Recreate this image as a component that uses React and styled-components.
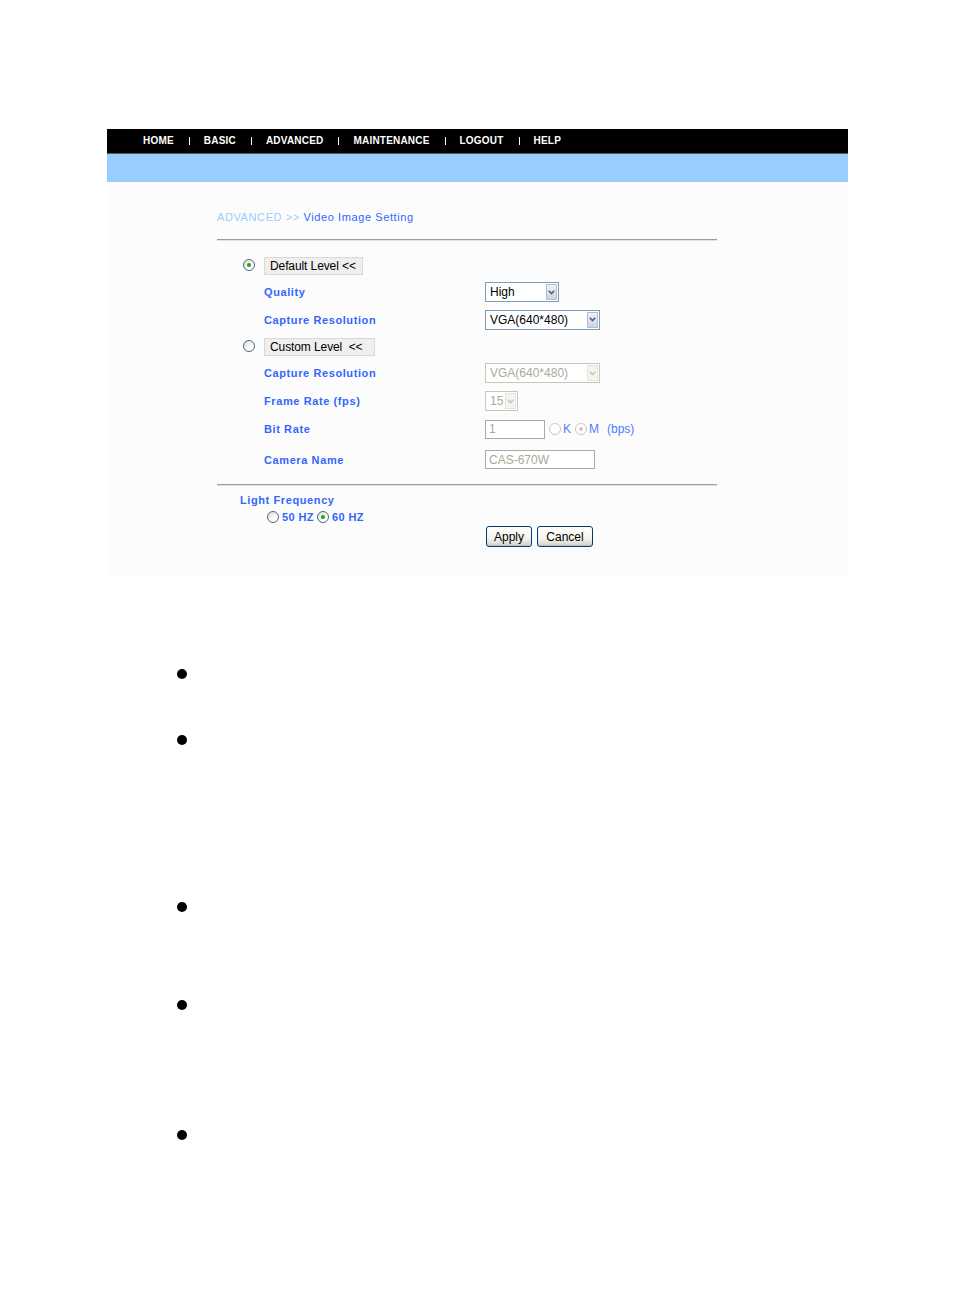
import React from 'react';
import styled, { createGlobalStyle } from 'styled-components';

const Global = createGlobalStyle`
  html, body { margin: 0; padding: 0; background: #fff; }
  body { font-family: "Liberation Sans", Arial, sans-serif; }
  * { box-sizing: border-box; }
`;

const Page = styled.div`
  width: 954px;
  min-height: 1311px;
  padding-top: 129px;
`;

const Frame = styled.div`
  margin-left: 107px;
  width: 741px;
`;

const NavBar = styled.nav`
  height: 25px;
  background: #000;
  border-bottom: 1px solid #4d5863;
  display: flex;
  align-items: center;
  padding-left: 36px;
`;

const NavItem = styled.span`
  color: #fff;
  font-weight: bold;
  font-size: 10px;
  letter-spacing: 0.2px;
  line-height: 12px;
`;

const NavSep = styled.span`
  display: inline-block;
  width: 1px;
  height: 8px;
  margin: 0 14px 0 15px;
  background: #fff;
`;

const BlueBand = styled.div`
  height: 28px;
  background: #99ccff;
`;

const Panel = styled.div`
  height: 393px;
  background: #fcfcfc;
  padding: 28px 0 0 110px;
`;

const Breadcrumb = styled.div`
  font-size: 11px;
  line-height: 14px;
  letter-spacing: 0.6px;
  color: #3366ff;
`;

const Crumb = styled.span`
  color: #99ccff;
`;

const Divider = styled.div`
  width: 500px;
  height: 2px;
  border-top: 1px solid #9c9c9c;
  border-bottom: 1px solid #e2e2e2;
  margin-top: ${p => p.$mt}px;
`;

const Form = styled.div`
  margin-top: 11px;
  display: flex;
  flex-direction: column;
`;

const Row = styled.div`
  display: grid;
  grid-template-columns: 47px 221px 1fr;
  align-items: center;
  height: ${p => p.$h}px;
`;

const RadioCell = styled.div`
  padding-left: 26px;
  display: flex;
  align-items: center;
`;

const Radio = styled.span`
  position: relative;
  display: inline-block;
  flex: none;
  width: 12px;
  height: 12px;
  margin-left: ${p => p.$ml || 0}px;
  border-radius: 50%;
  border: 1px solid ${p => (p.$disabled ? '#cac8bb' : '#4a6a8c')};
  background: ${p => (p.$disabled ? '#fff' : 'linear-gradient(135deg, #dcdcd6 0%, #ffffff 70%)')};
  &::after {
    content: '';
    display: ${p => (p.$checked ? 'block' : 'none')};
    position: absolute;
    left: 3px;
    top: 3px;
    width: 4px;
    height: 4px;
    border-radius: 50%;
    background: ${p => (p.$disabled ? '#cac8bb' : '#21a121')};
  }
`;

const LevelButton = styled.span`
  display: inline-flex;
  align-items: center;
  width: ${p => p.$w}px;
  height: 18px;
  padding-left: 5px;
  background: #efefef;
  border: 1px solid #d9d9d9;
  font-size: 12px;
  letter-spacing: -0.1px;
  color: #000;
  white-space: pre;
`;

const Label = styled.span`
  font-size: 11px;
  font-weight: bold;
  letter-spacing: 0.6px;
  color: #3366ff;
  white-space: nowrap;
`;

const SelectBox = styled.div`
  display: inline-flex;
  align-items: stretch;
  width: ${p => p.$w}px;
  height: ${p => p.$h}px;
  border: 1px solid ${p => (p.$disabled ? '#c9c7ba' : '#7f9db9')};
  background: #fff;
  font-size: 12px;
  color: ${p => (p.$disabled ? '#aca899' : '#000')};
`;

const SelectText = styled.span`
  flex: 1;
  display: flex;
  align-items: center;
  padding-left: 4px;
  white-space: nowrap;
  overflow: hidden;
`;

const SelectArrow = styled.span`
  width: 11px;
  margin: 1px;
  display: flex;
  align-items: center;
  justify-content: center;
  border: 1px solid ${p => (p.$disabled ? '#e6e4da' : '#b3bdd2')};
  background: ${p => (p.$disabled ? '#f4f4f1' : 'linear-gradient(180deg, #f0f2f8 0%, #cdd4e3 100%)')};
`;

const Control = styled.div`
  display: flex;
  align-items: center;
`;

const TextBox = styled.input`
  width: ${p => p.$w}px;
  height: 19px;
  border: 1px solid #a9a9a9;
  background: #fff;
  padding: 0 0 0 3px;
  margin: 0;
  font-family: "Liberation Sans", Arial, sans-serif;
  font-size: 12px;
  color: #aca899;
  -webkit-text-fill-color: #aca899;
  opacity: 1;
`;

const Unit = styled.span`
  font-size: 12px;
  color: #4d7dff;
  margin-left: ${p => p.$ml || 0}px;
`;

const LightSection = styled.div`
  padding-left: 23px;
  margin-top: 6px;
`;

const LightLabel = styled.div`
  font-size: 11px;
  font-weight: bold;
  letter-spacing: 0.6px;
  line-height: 16px;
  color: #3366ff;
`;

const FreqRow = styled.div`
  display: flex;
  align-items: center;
  height: 17px;
  padding-left: 27px;
  gap: 3px;
`;

const FreqText = styled.span`
  font-size: 11px;
  font-weight: bold;
  letter-spacing: 0.4px;
  color: #3366ff;
`;

const ButtonRow = styled.div`
  display: flex;
  gap: 5px;
  margin-top: 1px;
  padding-left: 269px;
`;

const XPButton = styled.button`
  width: ${p => p.$w}px;
  height: 21px;
  padding: 0;
  border: 1px solid #003c74;
  border-radius: 3px;
  background: linear-gradient(180deg, #ffffff 0%, #f3f3ef 60%, #d6d0c5 100%);
  font-family: "Liberation Sans", Arial, sans-serif;
  font-size: 12px;
  color: #000;
  box-shadow: inset 0 -1px 0 #c9c3b6;
`;

const BulletList = styled.ul`
  list-style: none;
  margin: 0;
  padding: 0 0 0 177px;
`;

const Bullet = styled.li`
  width: 10px;
  height: 10px;
  border-radius: 50%;
  background: #000;
  margin-top: ${p => p.$mt}px;
`;

const Chevron = ({ disabled }) => (
  <svg width="7" height="5" viewBox="0 0 7 5">
    <path d="M0.8 0.8 L3.5 3.6 L6.2 0.8" fill="none" stroke={disabled ? '#c9c7ba' : '#4d6185'} strokeWidth="1.6" />
  </svg>
);

const Select = ({ w, h, value, disabled }) => (
  <SelectBox $w={w} $h={h} $disabled={disabled}>
    <SelectText>{value}</SelectText>
    <SelectArrow $disabled={disabled}>
      <Chevron disabled={disabled} />
    </SelectArrow>
  </SelectBox>
);

const navItems = ['HOME', 'BASIC', 'ADVANCED', 'MAINTENANCE', 'LOGOUT', 'HELP'];
const bullets = [94, 56, 157, 88, 120];

export default function App() {
  return (
    <Page>
      <Global />
      <Frame>
        <NavBar>
          {navItems.map((n, i) => (
            <React.Fragment key={n}>
              {i > 0 && <NavSep aria-hidden="true" />}
              <NavItem>{n}</NavItem>
            </React.Fragment>
          ))}
        </NavBar>
        <BlueBand />
        <Panel>
          <Breadcrumb>
            <Crumb>ADVANCED &gt;&gt; </Crumb>Video Image Setting
          </Breadcrumb>
          <Divider $mt={15} />
          <Form>
            <Row $h={26}>
              <RadioCell><Radio $checked /></RadioCell>
              <div><LevelButton $w={99}>Default Level &lt;&lt;</LevelButton></div>
              <div />
            </Row>
            <Row $h={28}>
              <div />
              <Label>Quality</Label>
              <Control><Select w={74} h={20} value="High" /></Control>
            </Row>
            <Row $h={27}>
              <div />
              <Label>Capture Resolution</Label>
              <Control><Select w={115} h={20} value="VGA(640*480)" /></Control>
            </Row>
            <Row $h={26}>
              <RadioCell><Radio /></RadioCell>
              <div><LevelButton $w={111}>Custom Level  &lt;&lt;</LevelButton></div>
              <div />
            </Row>
            <Row $h={28}>
              <div />
              <Label>Capture Resolution</Label>
              <Control><Select w={115} h={20} value="VGA(640*480)" disabled /></Control>
            </Row>
            <Row $h={28}>
              <div />
              <Label>Frame Rate (fps)</Label>
              <Control><Select w={33} h={20} value="15" disabled /></Control>
            </Row>
            <Row $h={28}>
              <div />
              <Label>Bit Rate</Label>
              <Control>
                <TextBox $w={60} value="1" disabled readOnly />
                <Radio $disabled $ml={4} />
                <Unit $ml={2}>K</Unit>
                <Radio $disabled $checked $ml={4} />
                <Unit $ml={2}>M</Unit>
                <Unit $ml={8}>(bps)</Unit>
              </Control>
            </Row>
            <Row $h={33}>
              <div />
              <Label>Camera Name</Label>
              <Control><TextBox $w={110} value="CAS-670W" disabled readOnly /></Control>
            </Row>
          </Form>
          <Divider $mt={8} />
          <LightSection>
            <LightLabel>Light Frequency</LightLabel>
            <FreqRow>
              <Radio />
              <FreqText>50 HZ</FreqText>
              <Radio $checked />
              <FreqText>60 HZ</FreqText>
            </FreqRow>
          </LightSection>
          <ButtonRow>
            <XPButton $w={46}>Apply</XPButton>
            <XPButton $w={56}>Cancel</XPButton>
          </ButtonRow>
        </Panel>
      </Frame>
      <BulletList>
        {bullets.map((m, i) => (
          <Bullet key={i} $mt={m} />
        ))}
      </BulletList>
    </Page>
  );
}
